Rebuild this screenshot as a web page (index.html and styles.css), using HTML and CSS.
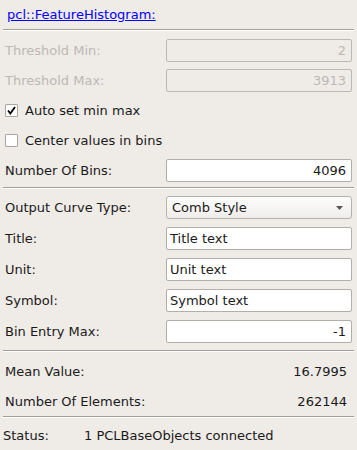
FILE: index.html
```html
<!DOCTYPE html>
<html lang="en">
<head>
    <meta charset="UTF-8">
    <title>pcl::FeatureHistogram</title>
    <link rel="stylesheet" href="styles.css">
</head>
<body>
    <div class="panel">
        <div class="panel__header">
            <a class="panel__link" href="#">pcl::FeatureHistogram:</a>
        </div>

        <div class="panel__section panel__section--first">
            <div class="row">
                <span class="row__label row__label--disabled">Threshold Min:</span>
                <div class="field field--number field--disabled">2</div>
            </div>
            <div class="row">
                <span class="row__label row__label--disabled">Threshold Max:</span>
                <div class="field field--number field--disabled">3913</div>
            </div>
            <label class="check">
                <span class="check__box check__box--on">
                    <svg width="9" height="9" viewBox="0 0 9 9"><path d="M1 4.5 L3.3 7.5 L8 1" fill="none" stroke="#000" stroke-width="1.8"/></svg>
                </span>
                Auto set min max
            </label>
            <label class="check">
                <span class="check__box"></span>
                Center values in bins
            </label>
            <div class="row">
                <span class="row__label">Number Of Bins:</span>
                <div class="field field--number">4096</div>
            </div>
        </div>

        <div class="panel__section">
            <div class="row">
                <span class="row__label">Output Curve Type:</span>
                <div class="combo">
                    <span>Comb Style</span>
                    <svg class="combo__arrow" width="7" height="4" viewBox="0 0 7 4"><path d="M0 0 H7 L3.5 4 Z" fill="#5a5856"/></svg>
                </div>
            </div>
            <div class="row">
                <span class="row__label">Title:</span>
                <div class="field">Title text</div>
            </div>
            <div class="row">
                <span class="row__label">Unit:</span>
                <div class="field">Unit text</div>
            </div>
            <div class="row">
                <span class="row__label">Symbol:</span>
                <div class="field">Symbol text</div>
            </div>
            <div class="row">
                <span class="row__label">Bin Entry Max:</span>
                <div class="field field--number">-1</div>
            </div>
        </div>

        <div class="panel__section panel__section--info">
            <div class="row">
                <span class="row__label">Mean Value:</span>
                <span class="row__value">16.7995</span>
            </div>
            <div class="row">
                <span class="row__label">Number Of Elements:</span>
                <span class="row__value">262144</span>
            </div>
        </div>

        <div class="status">
            <span class="status__label">Status:</span>
            <span>1 PCLBaseObjects connected</span>
        </div>
    </div>
</body>
</html>
```

FILE: styles.css
```css
* {
    margin: 0;
    padding: 0;
    box-sizing: border-box;
}

body {
    width: 357px;
    height: 450px;
    background-color: #efebe7;
    font-family: "DejaVu Sans", sans-serif;
    font-size: 13px;
    color: #1a1a1a;
    overflow: hidden;
}

.panel__header {
    height: 30px;
    padding: 7px 0 0 4px;
    margin: 0 3px;
    border-bottom: 1px solid #a29f9b;
    box-shadow: 0 1px 0 #ffffff;
}

.panel__link {
    color: #0000ff;
    text-decoration: underline;
}

.panel__section {
    display: flex;
    flex-direction: column;
    gap: 8px;
    margin: 0 3px;
    padding: 8px 2px 7px 2px;
    border-bottom: 1px solid #a29f9b;
    box-shadow: 0 1px 0 #ffffff;
}

.panel__section--first {
    gap: 7px;
    padding-top: 9px;
    padding-bottom: 5px;
}

.panel__section--info {
    gap: 7px;
    padding-top: 9px;
    padding-bottom: 3px;
}

.row {
    display: flex;
    align-items: center;
    height: 23px;
}

.row__label {
    width: 161px;
    flex-shrink: 0;
}

.row__label--disabled {
    color: #bdb9b4;
}

.row__value {
    flex: 1;
    text-align: right;
    padding-right: 5px;
}

.field {
    width: 186px;
    height: 23px;
    background-color: #ffffff;
    border: 1px solid #b2aeaa;
    border-radius: 2px;
    padding: 0 3px;
    line-height: 21px;
    white-space: nowrap;
}

.field--number {
    text-align: right;
    padding-right: 5px;
}

.field--disabled {
    background-color: #efebe7;
    border-color: #bcb8b3;
    color: #bcb8b3;
}

.check {
    display: flex;
    align-items: center;
    gap: 7px;
    height: 23px;
}

.check__box {
    width: 13px;
    height: 13px;
    background-color: #ffffff;
    border: 1px solid #a9a5a1;
    border-radius: 1px;
    display: flex;
    align-items: center;
    justify-content: center;
}

.combo {
    width: 186px;
    height: 23px;
    border: 1px solid #b5b1ad;
    border-radius: 3px;
    background: linear-gradient(#fdfdfc, #efedeb);
    display: flex;
    align-items: center;
    justify-content: space-between;
    padding: 0 8px 0 5px;
}

.status {
    display: flex;
    align-items: center;
    height: 23px;
    margin-top: 7px;
    padding-left: 3px;
}

.status__label {
    width: 81px;
}
```
